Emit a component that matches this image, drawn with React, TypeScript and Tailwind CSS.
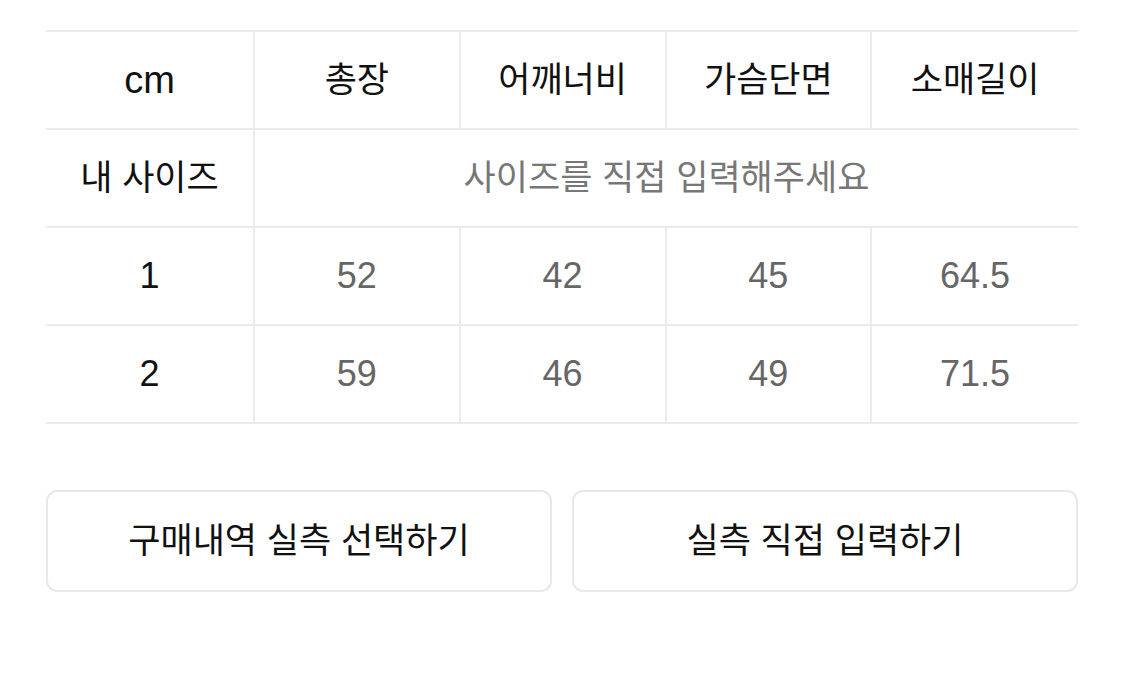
import React from 'react'

const headers = ['총장', '어깨너비', '가슴단면', '소매길이']

const rows = [
  { size: '1', values: ['52', '42', '45', '64.5'] },
  { size: '2', values: ['59', '46', '49', '71.5'] },
]

const font = { fontFamily: '"Liberation Sans", "Noto Sans CJK KR", sans-serif' }

export default function App() {
  return (
    <div className="min-h-screen bg-white pl-[46px] pt-[30px]" style={font}>
      <div className="w-[1032px]">
        {/* Size table */}
        <div className="grid grid-cols-[209px_repeat(4,1fr)] border-t-2 border-[#ebebeb]">
          {/* Header row */}
          <div className="h-[98px] flex items-center justify-center border-r-2 border-b-2 border-[#ebebeb] text-[38px] text-[#111]">
            cm
          </div>
          {headers.map((h, i) => (
            <div
              key={h}
              className={
                'h-[98px] flex items-center justify-center border-b-2 border-[#ebebeb] text-[35px] text-[#111] ' +
                (i < headers.length - 1 ? 'border-r-2' : '')
              }
            >
              {h}
            </div>
          ))}

          {/* My size row */}
          <div className="h-[98px] flex items-center justify-center border-r-2 border-b-2 border-[#ebebeb] text-[35px] text-[#111]">
            내 사이즈
          </div>
          <div className="col-span-4 h-[98px] flex items-center justify-center border-b-2 border-[#ebebeb] text-[35px] text-[#777]">
            사이즈를 직접 입력해주세요
          </div>

          {/* Size rows */}
          {rows.map((row) => (
            <React.Fragment key={row.size}>
              <div className="h-[98px] flex items-center justify-center border-r-2 border-b-2 border-[#ebebeb] text-[36px] text-[#111]">
                {row.size}
              </div>
              {row.values.map((v, i) => (
                <div
                  key={i}
                  className={
                    'h-[98px] flex items-center justify-center border-b-2 border-[#ebebeb] text-[36px] text-[#666] ' +
                    (i < row.values.length - 1 ? 'border-r-2' : '')
                  }
                >
                  {v}
                </div>
              ))}
            </React.Fragment>
          ))}
        </div>

        {/* Buttons */}
        <div className="mt-[66px] grid grid-cols-2 gap-[20px]">
          <button className="h-[102px] rounded-[11px] border-2 border-[#e8e8e8] bg-white text-[35px] text-[#111]">
            구매내역 실측 선택하기
          </button>
          <button className="h-[102px] rounded-[11px] border-2 border-[#e8e8e8] bg-white text-[35px] text-[#111]">
            실측 직접 입력하기
          </button>
        </div>
      </div>
    </div>
  )
}
